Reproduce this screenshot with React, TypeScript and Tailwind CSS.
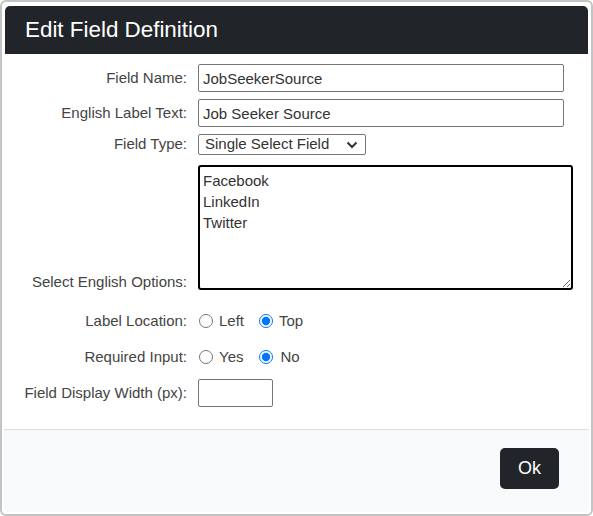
export default function App() {
  return (
    <div className="w-[593px] h-[516px] bg-white font-['Liberation_Sans',Arial,sans-serif] text-[15px] text-[#444]">
      <div className="h-full border-2 border-[#c4c4c4] rounded-[6px] p-[2px]">
        <div className="h-full flex flex-col">

          <div className="mx-[1px] mt-[2px] h-[48px] shrink-0 rounded-t-[5px] bg-[#212529] flex items-center pl-[20px]">
            <h1 className="text-white text-[22.4px] leading-none">Edit Field Definition</h1>
          </div>

          <div className="flex-1 pt-[10px]">
            <div className="grid grid-cols-[183px_1fr] gap-x-[11px]">

              <label className="h-[28px] flex items-center justify-end">Field Name:</label>
              <div>
                <input
                  readOnly
                  value="JobSeekerSource"
                  className="w-[366px] h-[28px] border border-[#767676] rounded-[2px] px-[4px] text-[#333]"
                />
              </div>

              <label className="mt-[7px] h-[28px] flex items-center justify-end">English Label Text:</label>
              <div className="mt-[7px]">
                <input
                  readOnly
                  value="Job Seeker Source"
                  className="w-[366px] h-[28px] border border-[#767676] rounded-[2px] px-[4px] text-[#333]"
                />
              </div>

              <label className="mt-[7px] h-[21px] flex items-center justify-end">Field Type:</label>
              <div className="mt-[7px]">
                <div className="relative w-[168px] h-[21px] border border-[#767676] rounded-[2px] flex items-center pl-[6px] text-[#333]">
                  <span>Single Select Field</span>
                  <svg className="absolute right-[7px] top-[6px]" width="12" height="8" viewBox="0 0 12 8" fill="none">
                    <path d="M1.5 1.5 L6 6 L10.5 1.5" stroke="#333" strokeWidth="2" />
                  </svg>
                </div>
              </div>

              <label className="mt-[10px] h-[125px] flex items-end justify-end translate-y-[3px]">Select English Options:</label>
              <div className="mt-[10px]">
                <textarea
                  readOnly
                  value={"Facebook\nLinkedIn\nTwitter"}
                  className="block w-[375px] h-[125px] border-2 border-black rounded-[3px] px-[3px] pt-[3px] leading-[21px] text-[#333] outline-none"
                />
              </div>

              <label className="mt-[21px] h-[20px] flex items-center justify-end">Label Location:</label>
              <div className="mt-[21px] h-[20px] flex items-center">
                <input type="radio" name="loc" readOnly className="m-0 ml-[1px] w-[14px] h-[14px]" />
                <span className="ml-[6px]">Left</span>
                <input type="radio" name="loc" readOnly checked className="m-0 ml-[15px] w-[14px] h-[14px] accent-[#0075ff]" />
                <span className="ml-[6px]">Top</span>
              </div>

              <label className="mt-[16px] h-[20px] flex items-center justify-end">Required Input:</label>
              <div className="mt-[16px] h-[20px] flex items-center">
                <input type="radio" name="req" readOnly className="m-0 ml-[1px] w-[14px] h-[14px]" />
                <span className="ml-[6px]">Yes</span>
                <input type="radio" name="req" readOnly checked className="m-0 ml-[16px] w-[14px] h-[14px] accent-[#0075ff]" />
                <span className="ml-[7px]">No</span>
              </div>

              <label className="mt-[12px] h-[28px] flex items-center justify-end">Field Display Width (px):</label>
              <div className="mt-[12px]">
                <input
                  readOnly
                  value=""
                  className="w-[75px] h-[28px] border border-[#767676] rounded-[2px] px-[4px]"
                />
              </div>

            </div>
          </div>

          <div className="h-[83px] shrink-0 border-t border-[#dee2e6] bg-[#f8f9fa] rounded-b-[4px] flex items-start justify-end pt-[18px] pr-[30px]">
            <button className="w-[59px] h-[41px] rounded-[5px] bg-[#212529] text-white text-[18px]">Ok</button>
          </div>

        </div>
      </div>
    </div>
  );
}
